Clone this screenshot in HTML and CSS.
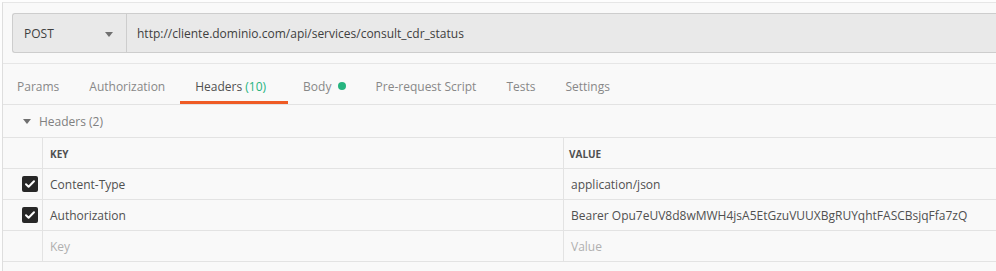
FILE: index.html
```html
<!DOCTYPE html>
<html lang="es">
<head>
  <meta charset="UTF-8">
  <meta name="viewport" content="width=device-width, initial-scale=1.0">
  <title>Consult CDR status</title>
  <link rel="stylesheet" href="styles.css">
</head>
<body>
  <div class="page">
    <div class="request">
      <div class="request-bar">
        <div class="method">
          <span>POST</span>
          <span class="caret"></span>
        </div>
        <div class="url">http://cliente.dominio.com/api/services/consult_cdr_status</div>
      </div>
    </div>

    <nav class="tabs">
      <div class="tab">Params</div>
      <div class="tab">Authorization</div>
      <div class="tab active">Headers <span class="count">(10)</span></div>
      <div class="tab">Body <span class="dot"></span></div>
      <div class="tab">Pre-request Script</div>
      <div class="tab">Tests</div>
      <div class="tab">Settings</div>
    </nav>

    <div class="section-title">
      <span class="caret-down"></span>
      Headers (2)
    </div>

    <div class="kv-table">
      <div class="kv-row head">
        <div class="cell check"></div>
        <div class="cell key">KEY</div>
        <div class="cell value">VALUE</div>
      </div>
      <div class="kv-row">
        <div class="cell check"><span class="checkbox"><svg viewBox="0 0 16 16" width="16" height="16"><path d="M4 8.3l2.6 2.5L12 5.3" fill="none" stroke="#fff" stroke-width="2" stroke-linecap="round" stroke-linejoin="round"/></svg></span></div>
        <div class="cell key">Content-Type</div>
        <div class="cell value">application/json</div>
      </div>
      <div class="kv-row">
        <div class="cell check"><span class="checkbox"><svg viewBox="0 0 16 16" width="16" height="16"><path d="M4 8.3l2.6 2.5L12 5.3" fill="none" stroke="#fff" stroke-width="2" stroke-linecap="round" stroke-linejoin="round"/></svg></span></div>
        <div class="cell key">Authorization</div>
        <div class="cell value">Bearer Opu7eUV8d8wMWH4jsA5EtGzuVUUXBgRUYqhtFASCBsjqFfa7zQ</div>
      </div>
      <div class="kv-row">
        <div class="cell check"></div>
        <div class="cell key placeholder">Key</div>
        <div class="cell value placeholder">Value</div>
      </div>
    </div>
  </div>
</body>
</html>
```

FILE: styles.css
```css
body {
  margin: 0;
  padding: 0;
  background-color: #fdfdfd;
  font-family: "Open Sans", Arial, sans-serif;
  font-size: 12px;
  color: #505050;
}
.page {
  margin: 2px 0 0 2px;
  border-top: 1px solid #e6e6e6;
  border-left: 1px solid #dedede;
  background-color: #f9f9f9;
  height: 268px;
}
.request {
  padding: 10px 0 10px 9px;
  border-bottom: 1px solid #e6e6e6;
}
.request-bar {
  display: flex;
  height: 38px;
  border: 1px solid #cdcdcd;
  border-right: none;
  border-radius: 3px 0 0 3px;
  background-color: #e9e9e9;
}
.method {
  display: flex;
  align-items: center;
  justify-content: space-between;
  width: 114px;
  box-sizing: border-box;
  padding: 0 13px 0 11px;
  border-right: 1px solid #cdcdcd;
  color: #404040;
}
.caret {
  width: 0;
  height: 0;
  border-left: 4px solid transparent;
  border-right: 4px solid transparent;
  border-top: 5px solid #707070;
  margin-top: 2px;
}
.url {
  display: flex;
  align-items: center;
  padding-left: 10px;
  color: #404040;
}
.tabs {
  display: flex;
  border-bottom: 1px solid #e3e3e3;
}
.tab {
  box-sizing: border-box;
  height: 40px;
  padding: 14px 15px 0;
  line-height: 18px;
  color: #888;
  border-bottom: 3px solid transparent;
  white-space: nowrap;
}
.tab:first-child {
  padding-left: 14px;
}
.tab.active {
  color: #505050;
  border-bottom-color: #ef5b25;
  padding: 14px 22px 0 15px;
}
.count {
  color: #26b47f;
}
.dot {
  display: inline-block;
  width: 8px;
  height: 8px;
  border-radius: 50%;
  background-color: #26b47f;
  margin-left: 3px;
  vertical-align: 1px;
}
.section-title {
  display: flex;
  align-items: center;
  height: 32px;
  padding-left: 20px;
  color: #808080;
}
.caret-down {
  width: 0;
  height: 0;
  border-left: 4px solid transparent;
  border-right: 4px solid transparent;
  border-top: 5px solid #707070;
  margin-right: 8px;
  margin-top: 1px;
}
.kv-table {
  border-top: 1px solid #e3e3e3;
}
.kv-row {
  display: flex;
  height: 30px;
  border-bottom: 1px solid #e3e3e3;
}
.cell {
  display: flex;
  align-items: center;
}
.check {
  box-sizing: border-box;
  width: 40px;
  justify-content: flex-end;
  padding-right: 4px;
  border-right: 1px solid #e3e3e3;
}
.key {
  box-sizing: border-box;
  width: 521px;
  padding-left: 7px;
  border-right: 1px solid #e3e3e3;
}
.value {
  padding-left: 7px;
}
.head .cell {
  font-size: 10px;
  font-weight: bold;
  color: #505050;
  padding-top: 2px;
}
.head .value {
  padding-left: 5px;
}
.checkbox {
  display: block;
  width: 16px;
  height: 16px;
  border-radius: 2px;
  background-color: #282828;
}
.checkbox svg {
  display: block;
}
.placeholder {
  color: #b0b0b0;
}
```
